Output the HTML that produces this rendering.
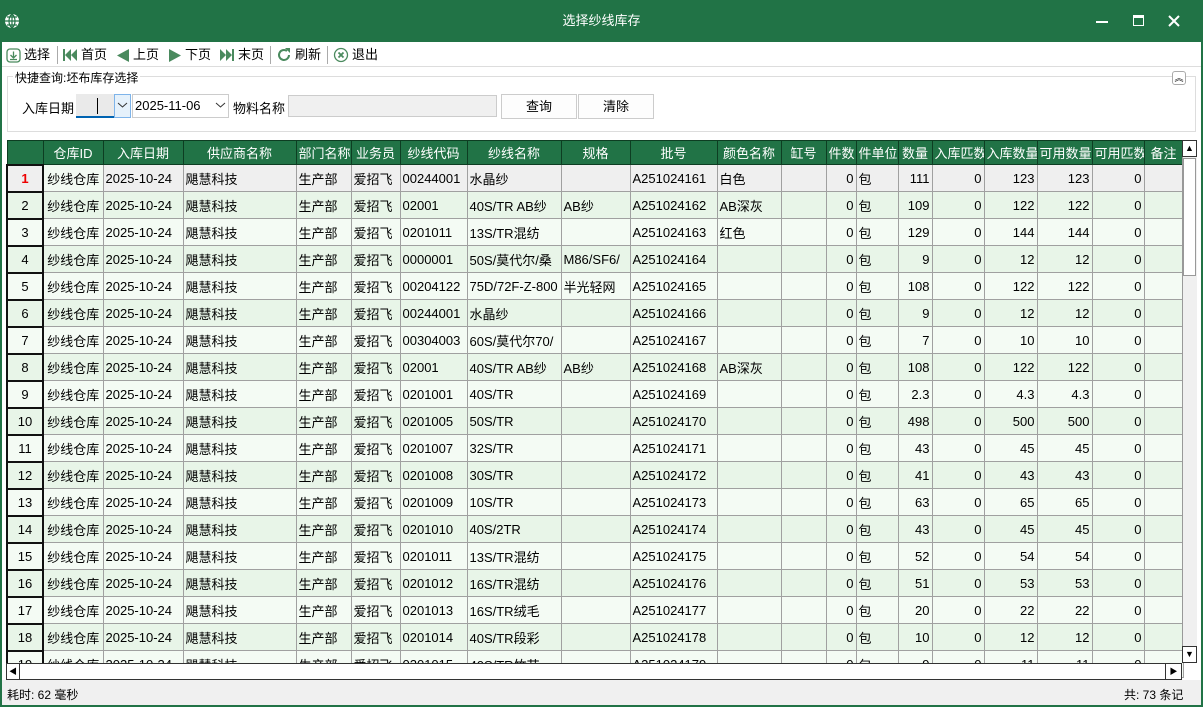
<!DOCTYPE html>
<html><head><meta charset="utf-8">
<style>
*{margin:0;padding:0;box-sizing:border-box}
body{width:1203px;height:707px;overflow:hidden;background:#f0f0f0;font-family:"Liberation Sans","Noto Sans CJK SC",sans-serif;font-size:13px;color:#000;position:relative}
.abs{position:absolute}
#title{left:0;top:0;width:1203px;height:42px;background:#217346;color:#fff;text-align:center;line-height:42px;font-size:13px}
#frame{left:0;top:42px;width:1203px;height:665px;border-left:2px solid #217346;border-right:2px solid #217346;border-bottom:2px solid #217346;background:#fff}
#tb{left:2px;top:42px;width:1199px;height:25px;background:#fff;border-bottom:1px solid #ddd}
.tbi{position:absolute;top:4px;font-size:13px;line-height:18px;display:flex;align-items:center;gap:3px}
.sep{position:absolute;top:4px;width:1px;height:18px;background:#aaa}
#grp{left:7px;top:76px;width:1189px;height:56px;border:1px solid #ddd}
table{position:absolute;left:6px;top:140px;border-collapse:collapse;table-layout:fixed;width:1176px}
td,th{height:27px;border:1px solid #a0a0a0;white-space:nowrap;overflow:hidden;padding:0 2px;font-weight:normal;font-size:13px}
th{background:#217346;color:#fff;height:24px;border-color:#0d3d22;text-align:center}
td.n{border:2px solid #111;background:#eaf6ea;text-align:center}
td.r{text-align:right}
tr td:nth-child(2){text-align:center}
tr.a td{background:#e8f5e8}
tr.b td{background:#f4fbf4}
tr.s td{background:#efefef}
tr.s td.w{background:#f2faf2}
#hs{left:6px;top:663px;width:1176px;height:17px;border:1px solid #333;background:#fff}
#vs{left:1182px;top:140px;width:15px;height:523px;background:#f0f0f0;border-left:1px solid #999}
</style></head><body>
<div id="frame" class="abs"></div>
<div id="title" class="abs">选择纱线库存
<svg class="abs" style="left:4px;top:13px" width="16" height="16" viewBox="0 0 16 16"><circle cx="8" cy="8" r="7" fill="#fff"/><path d="M1 8h14M8 1v14M3 4h10M3 12h10M8 1c-4 3-4 11 0 14M8 1c4 3 4 11 0 14" stroke="#217346" stroke-width="1.2" fill="none"/></svg>
<div class="abs" style="left:1096px;top:21px;width:12px;height:2px;background:#fff"></div>
<div class="abs" style="left:1133px;top:15px;width:11px;height:11px;border:1.5px solid #fff;border-top-width:3px"></div>
<svg class="abs" style="left:1168px;top:15px" width="12" height="12"><path d="M1 1L11 11M11 1L1 11" stroke="#fff" stroke-width="2"/></svg>
</div>
<div id="tb" class="abs">
<div class="tbi" style="left:4px"><svg width="15" height="15"><rect x="1" y="1" width="13" height="13" rx="3" fill="none" stroke="#4a8a5e" stroke-width="1.3"/><path d="M7.5 3.5v6M4.5 7l3 3 3-3M4 11.5h7" stroke="#4a8a5e" stroke-width="1.3" fill="none"/></svg>选择</div>
<div class="sep" style="left:55px"></div>
<div class="tbi" style="left:60px"><svg width="16" height="14"><rect x="1" y="1" width="2" height="12" fill="#4a8a5e"/><path d="M9 1L3 7l6 6zM15 1L9 7l6 6z" fill="#4a8a5e"/></svg>首页</div>
<div class="tbi" style="left:114px"><svg width="14" height="15"><path d="M13 1L1 7.5 13 14z" fill="#4a8a5e"/></svg>上页</div>
<div class="tbi" style="left:166px"><svg width="14" height="15"><path d="M1 1l12 6.5L1 14z" fill="#4a8a5e"/></svg>下页</div>
<div class="tbi" style="left:217px"><svg width="16" height="14"><path d="M1 1l6 6-6 6zM7 1l6 6-6 6z" fill="#4a8a5e"/><rect x="13" y="1" width="2" height="12" fill="#4a8a5e"/></svg>末页</div>
<div class="sep" style="left:268px"></div>
<div class="tbi" style="left:274px"><svg width="16" height="16"><path d="M13 8a5 5 0 1 1-2-4" stroke="#4a8a5e" stroke-width="2" fill="none"/><path d="M9 1h5v5z" fill="#4a8a5e"/></svg>刷新</div>
<div class="sep" style="left:325px"></div>
<div class="tbi" style="left:331px"><svg width="16" height="16"><circle cx="8" cy="8" r="6.5" stroke="#4a8a5e" stroke-width="1.3" fill="none"/><path d="M5.5 5.5l5 5M10.5 5.5l-5 5" stroke="#4a8a5e" stroke-width="1.8"/></svg>退出</div>
</div>
<div id="grp" class="abs"></div>
<div class="abs" style="left:13px;top:69px;background:#fff;padding:0 2px;font-size:12px">快捷查询:坯布库存选择</div>
<div class="abs" style="left:1172px;top:71px;width:14px;height:14px;border:1px solid #aaa;border-radius:3px;background:#fff;font-size:9px;line-height:12px;text-align:center">︽</div>
<div class="abs" style="left:22px;top:98px">入库日期</div>
<div class="abs" style="left:76px;top:94px;width:55px;height:24px;background:#eaeaea;border-bottom:2px solid #0063b1"></div>
<div class="abs" style="left:97px;top:98px;width:1px;height:16px;background:#000"></div>
<div class="abs" style="left:114px;top:94px;width:17px;height:24px;border:1px solid #7eb4ea;background:#e5f1fb"></div>
<svg class="abs" style="left:117px;top:101px" width="11" height="8"><path d="M1 2l4.5 4L10 2" stroke="#333" fill="none"/></svg>
<div class="abs" style="left:132px;top:94px;width:97px;height:24px;border:1px solid #ccc;background:#fff;padding-left:2px;line-height:22px">2025-11-06</div>
<svg class="abs" style="left:215px;top:101px" width="11" height="8"><path d="M1 2l4.5 4L10 2" stroke="#333" fill="none"/></svg>
<div class="abs" style="left:233px;top:98px">物料名称</div>
<div class="abs" style="left:288px;top:95px;width:209px;height:22px;border:1px solid #ccc;background:#f0f0f0"></div>
<div class="abs" style="left:501px;top:94px;width:76px;height:25px;border:1px solid #ccc;background:#fdfdfd;text-align:center;line-height:23px">查询</div>
<div class="abs" style="left:578px;top:94px;width:76px;height:25px;border:1px solid #ccc;background:#fdfdfd;text-align:center;line-height:23px">清除</div>

<table>
<colgroup><col style="width:36px"><col style="width:60px"><col style="width:80px"><col style="width:113px"><col style="width:55px"><col style="width:49px"><col style="width:67px"><col style="width:94px"><col style="width:69px"><col style="width:87px"><col style="width:64px"><col style="width:45px"><col style="width:30px"><col style="width:42px"><col style="width:34px"><col style="width:52px"><col style="width:53px"><col style="width:55px"><col style="width:52px"><col style="width:39px"></colgroup>
<tr><th></th><th>仓库ID</th><th>入库日期</th><th>供应商名称</th><th>部门名称</th><th>业务员</th><th>纱线代码</th><th>纱线名称</th><th>规格</th><th>批号</th><th>颜色名称</th><th>缸号</th><th>件数</th><th>件单位</th><th>数量</th><th>入库匹数</th><th>入库数量</th><th>可用数量</th><th>可用匹数</th><th>备注</th></tr>
<tr class="s"><td class="n" style="color:#e00;font-weight:bold">1</td><td class="w">纱线仓库</td><td>2025-10-24</td><td>飓慧科技</td><td>生产部</td><td>爱招飞</td><td>00244001</td><td>水晶纱</td><td></td><td>A251024161</td><td>白色</td><td></td><td class="r">0</td><td>包</td><td class="r">111</td><td class="r">0</td><td class="r">123</td><td class="r">123</td><td class="r">0</td><td></td></tr>
<tr class="a"><td class="n">2</td><td>纱线仓库</td><td>2025-10-24</td><td>飓慧科技</td><td>生产部</td><td>爱招飞</td><td>02001</td><td>40S/TR AB纱</td><td>AB纱</td><td>A251024162</td><td>AB深灰</td><td></td><td class="r">0</td><td>包</td><td class="r">109</td><td class="r">0</td><td class="r">122</td><td class="r">122</td><td class="r">0</td><td></td></tr>
<tr class="b"><td class="n">3</td><td>纱线仓库</td><td>2025-10-24</td><td>飓慧科技</td><td>生产部</td><td>爱招飞</td><td>0201011</td><td>13S/TR混纺</td><td></td><td>A251024163</td><td>红色</td><td></td><td class="r">0</td><td>包</td><td class="r">129</td><td class="r">0</td><td class="r">144</td><td class="r">144</td><td class="r">0</td><td></td></tr>
<tr class="a"><td class="n">4</td><td>纱线仓库</td><td>2025-10-24</td><td>飓慧科技</td><td>生产部</td><td>爱招飞</td><td>0000001</td><td>50S/莫代尔/桑</td><td>M86/SF6/</td><td>A251024164</td><td></td><td></td><td class="r">0</td><td>包</td><td class="r">9</td><td class="r">0</td><td class="r">12</td><td class="r">12</td><td class="r">0</td><td></td></tr>
<tr class="b"><td class="n">5</td><td>纱线仓库</td><td>2025-10-24</td><td>飓慧科技</td><td>生产部</td><td>爱招飞</td><td>00204122</td><td>75D/72F-Z-800</td><td>半光轻网</td><td>A251024165</td><td></td><td></td><td class="r">0</td><td>包</td><td class="r">108</td><td class="r">0</td><td class="r">122</td><td class="r">122</td><td class="r">0</td><td></td></tr>
<tr class="a"><td class="n">6</td><td>纱线仓库</td><td>2025-10-24</td><td>飓慧科技</td><td>生产部</td><td>爱招飞</td><td>00244001</td><td>水晶纱</td><td></td><td>A251024166</td><td></td><td></td><td class="r">0</td><td>包</td><td class="r">9</td><td class="r">0</td><td class="r">12</td><td class="r">12</td><td class="r">0</td><td></td></tr>
<tr class="b"><td class="n">7</td><td>纱线仓库</td><td>2025-10-24</td><td>飓慧科技</td><td>生产部</td><td>爱招飞</td><td>00304003</td><td>60S/莫代尔70/</td><td></td><td>A251024167</td><td></td><td></td><td class="r">0</td><td>包</td><td class="r">7</td><td class="r">0</td><td class="r">10</td><td class="r">10</td><td class="r">0</td><td></td></tr>
<tr class="a"><td class="n">8</td><td>纱线仓库</td><td>2025-10-24</td><td>飓慧科技</td><td>生产部</td><td>爱招飞</td><td>02001</td><td>40S/TR AB纱</td><td>AB纱</td><td>A251024168</td><td>AB深灰</td><td></td><td class="r">0</td><td>包</td><td class="r">108</td><td class="r">0</td><td class="r">122</td><td class="r">122</td><td class="r">0</td><td></td></tr>
<tr class="b"><td class="n">9</td><td>纱线仓库</td><td>2025-10-24</td><td>飓慧科技</td><td>生产部</td><td>爱招飞</td><td>0201001</td><td>40S/TR</td><td></td><td>A251024169</td><td></td><td></td><td class="r">0</td><td>包</td><td class="r">2.3</td><td class="r">0</td><td class="r">4.3</td><td class="r">4.3</td><td class="r">0</td><td></td></tr>
<tr class="a"><td class="n">10</td><td>纱线仓库</td><td>2025-10-24</td><td>飓慧科技</td><td>生产部</td><td>爱招飞</td><td>0201005</td><td>50S/TR</td><td></td><td>A251024170</td><td></td><td></td><td class="r">0</td><td>包</td><td class="r">498</td><td class="r">0</td><td class="r">500</td><td class="r">500</td><td class="r">0</td><td></td></tr>
<tr class="b"><td class="n">11</td><td>纱线仓库</td><td>2025-10-24</td><td>飓慧科技</td><td>生产部</td><td>爱招飞</td><td>0201007</td><td>32S/TR</td><td></td><td>A251024171</td><td></td><td></td><td class="r">0</td><td>包</td><td class="r">43</td><td class="r">0</td><td class="r">45</td><td class="r">45</td><td class="r">0</td><td></td></tr>
<tr class="a"><td class="n">12</td><td>纱线仓库</td><td>2025-10-24</td><td>飓慧科技</td><td>生产部</td><td>爱招飞</td><td>0201008</td><td>30S/TR</td><td></td><td>A251024172</td><td></td><td></td><td class="r">0</td><td>包</td><td class="r">41</td><td class="r">0</td><td class="r">43</td><td class="r">43</td><td class="r">0</td><td></td></tr>
<tr class="b"><td class="n">13</td><td>纱线仓库</td><td>2025-10-24</td><td>飓慧科技</td><td>生产部</td><td>爱招飞</td><td>0201009</td><td>10S/TR</td><td></td><td>A251024173</td><td></td><td></td><td class="r">0</td><td>包</td><td class="r">63</td><td class="r">0</td><td class="r">65</td><td class="r">65</td><td class="r">0</td><td></td></tr>
<tr class="a"><td class="n">14</td><td>纱线仓库</td><td>2025-10-24</td><td>飓慧科技</td><td>生产部</td><td>爱招飞</td><td>0201010</td><td>40S/2TR</td><td></td><td>A251024174</td><td></td><td></td><td class="r">0</td><td>包</td><td class="r">43</td><td class="r">0</td><td class="r">45</td><td class="r">45</td><td class="r">0</td><td></td></tr>
<tr class="b"><td class="n">15</td><td>纱线仓库</td><td>2025-10-24</td><td>飓慧科技</td><td>生产部</td><td>爱招飞</td><td>0201011</td><td>13S/TR混纺</td><td></td><td>A251024175</td><td></td><td></td><td class="r">0</td><td>包</td><td class="r">52</td><td class="r">0</td><td class="r">54</td><td class="r">54</td><td class="r">0</td><td></td></tr>
<tr class="a"><td class="n">16</td><td>纱线仓库</td><td>2025-10-24</td><td>飓慧科技</td><td>生产部</td><td>爱招飞</td><td>0201012</td><td>16S/TR混纺</td><td></td><td>A251024176</td><td></td><td></td><td class="r">0</td><td>包</td><td class="r">51</td><td class="r">0</td><td class="r">53</td><td class="r">53</td><td class="r">0</td><td></td></tr>
<tr class="b"><td class="n">17</td><td>纱线仓库</td><td>2025-10-24</td><td>飓慧科技</td><td>生产部</td><td>爱招飞</td><td>0201013</td><td>16S/TR绒毛</td><td></td><td>A251024177</td><td></td><td></td><td class="r">0</td><td>包</td><td class="r">20</td><td class="r">0</td><td class="r">22</td><td class="r">22</td><td class="r">0</td><td></td></tr>
<tr class="a"><td class="n">18</td><td>纱线仓库</td><td>2025-10-24</td><td>飓慧科技</td><td>生产部</td><td>爱招飞</td><td>0201014</td><td>40S/TR段彩</td><td></td><td>A251024178</td><td></td><td></td><td class="r">0</td><td>包</td><td class="r">10</td><td class="r">0</td><td class="r">12</td><td class="r">12</td><td class="r">0</td><td></td></tr>
<tr class="b"><td class="n">19</td><td>纱线仓库</td><td>2025-10-24</td><td>飓慧科技</td><td>生产部</td><td>爱招飞</td><td>0201015</td><td>40S/TR竹节</td><td></td><td>A251024179</td><td></td><td></td><td class="r">0</td><td>包</td><td class="r">9</td><td class="r">0</td><td class="r">11</td><td class="r">11</td><td class="r">0</td><td></td></tr>
</table>
<div class="abs" style="left:0;top:680px;width:1203px;height:27px;background:#f0f0f0;border-left:2px solid #217346;border-right:2px solid #217346;border-bottom:2px solid #217346"></div>
<div id="vs" class="abs"></div>
<div class="abs" style="left:1182px;top:140px;width:15px;height:17px;background:#fff;border:1px solid #333;text-align:center;font-size:9px;line-height:15px">▲</div>
<div class="abs" style="left:1183px;top:158px;width:13px;height:118px;background:#fff;border:1px solid #999"></div>
<div class="abs" style="left:1182px;top:646px;width:15px;height:17px;background:#fff;border:1px solid #333;text-align:center;font-size:9px;line-height:15px">▼</div>
<div id="hs" class="abs"></div>
<div class="abs" style="left:6px;top:663px;width:14px;height:17px;border:1px solid #333;background:#fff;text-align:center;font-size:8px;line-height:15px">◀</div>
<div class="abs" style="left:1165px;top:663px;width:17px;height:17px;border:1px solid #333;background:#fff;text-align:center;font-size:8px;line-height:15px">▶</div>
<div class="abs" style="left:7px;top:686px;font-size:12px">耗时: 62 毫秒</div>
<div class="abs" style="left:1124px;top:686px;font-size:12px">共: 73 条记</div>
</body></html>
